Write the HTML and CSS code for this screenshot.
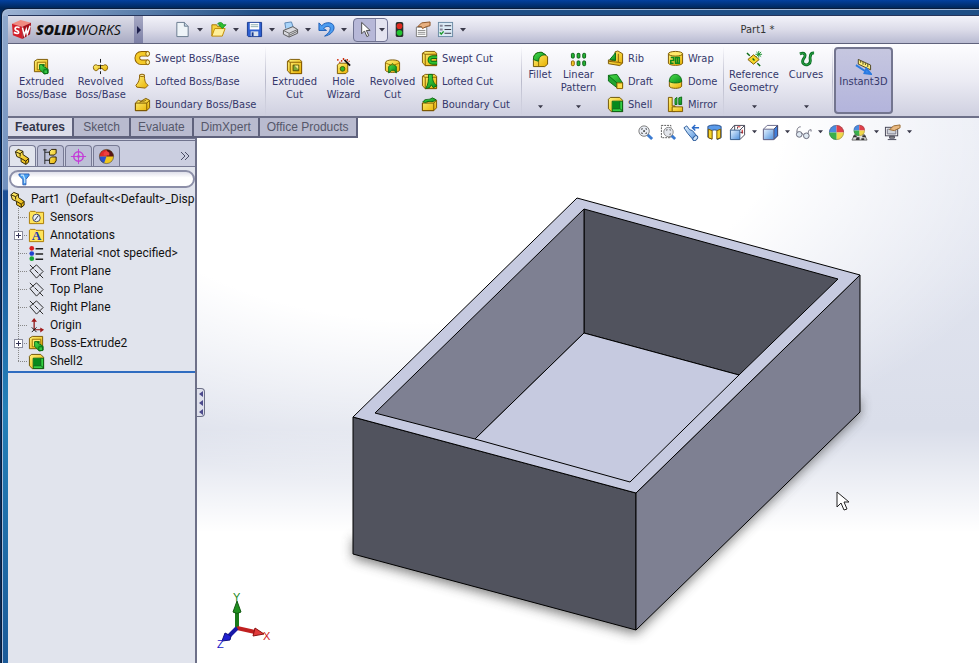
FILE: index.html
```html
<!DOCTYPE html>
<html lang="en">
<head>
  <meta charset="UTF-8">
  <title>SolidWorks - Part1</title>
  <link rel="stylesheet" href="styles.css">
</head>
<body>

<!-- icon sprite -->
<svg class="sprite" aria-hidden="true">
  <defs>
    <linearGradient id="gold" x1="0" y1="0" x2="1" y2="1"><stop offset="0" stop-color="#fff27a"/><stop offset="1" stop-color="#e8b000"/></linearGradient>
    <linearGradient id="leaf" x1="0" y1="0" x2="1" y2="1"><stop offset="0" stop-color="#4be04b"/><stop offset="1" stop-color="#0a8a1c"/></linearGradient>
    <linearGradient id="sky" x1="0" y1="0" x2="1" y2="1"><stop offset="0" stop-color="#e6f4ff"/><stop offset="1" stop-color="#4d8fdc"/></linearGradient>
  </defs>

  <symbol id="caret" viewBox="0 0 6 4"><path d="M0 0h6L3 3.500z" fill="#3a3a4a"/></symbol>

  <symbol id="i-logo" viewBox="0 0 22 22">
    <path d="M1 5L10 1l11 3-8 4z" fill="#f08a80"/><path d="M1 5l11 3v13L2 17z" fill="#d3202a"/><path d="M12 8l9-4-1 12-8 5z" fill="#a50f1a"/>
    <path d="M9 9c-5-2-6 2-3 3s3 5-3 2" fill="none" stroke="#fff" stroke-width="1.800"/><path d="M12 9l2 8 2-6 1 5 3-9" fill="none" stroke="#fff" stroke-width="1.600"/>
  </symbol>

  <!-- quick access -->
  <symbol id="i-new" viewBox="0 0 18 18"><path d="M3 1.500h8l4 4v11H3z" fill="#eef4f8" stroke="#66788c"/><path d="M11 1.500v4h4" fill="#c5d6e4" stroke="#66788c"/></symbol>
  <symbol id="i-open" viewBox="0 0 18 18"><path d="M2 16V4h5l1 2h6v3" fill="#f6d23c" stroke="#a87800"/><path d="M2 16L5 8h11l-3 8z" fill="#fff09a" stroke="#c08a00"/><path d="M8 3c2-2 5-2 6 1h3l-4 4-4-4h2c0-1-1-1-3-1z" fill="#2fc22f" stroke="#0b8a1c" stroke-width=".8"/></symbol>
  <symbol id="i-save" viewBox="0 0 18 18"><path d="M1.500 1.500h15v15h-14l-1-1z" fill="#2d5fd0" stroke="#173a90"/><path d="M4 2h10v7H4z" fill="#fff"/><path d="M5 4h8M5 6h8" stroke="#8aa"/><path d="M5 11h8v5H5z" fill="#dbe3ee"/><path d="M6 12h2v4H6z" fill="#173a90"/></symbol>
  <symbol id="i-print" viewBox="0 0 18 18"><path d="M4 8L3 2l7-1 2 6" fill="#a8d4fa" stroke="#5a86b4"/><path d="M1.500 10l10-4 5 3v4l-9 4-6-3z" fill="#d9d9de" stroke="#555"/><path d="M1.500 10l6 3 9-4M7.500 13v4M8 15l8-4" fill="none" stroke="#666"/></symbol>
  <symbol id="i-undo" viewBox="0 0 18 18"><path d="M1 2v8h8L6 8c2-3 7-3 7 0 0 3-3 6-6 8 6-1 10-5 10-9 0-6-9-7-13-2z" fill="#4b9cf0" stroke="#1a5ab4"/></symbol>
  <symbol id="i-select" viewBox="0 0 18 18"><path d="M6 1.500v12l3-3 2.500 6 2-1-2.500-5.500h4z" fill="#fff" stroke="#444"/></symbol>
  <symbol id="i-traffic" viewBox="0 0 18 18"><rect x="5" y="1" width="8" height="16" rx="2" fill="#26302c"/><circle cx="9" cy="5.500" r="3" fill="#e02a20"/><circle cx="9" cy="12.500" r="3" fill="#22c530"/></symbol>
  <symbol id="i-props" viewBox="0 0 18 18"><path d="M2.500 6.500h11v10h-11z" fill="#fff" stroke="#777"/><path d="M4 10h8M4 12h8M4 14h8" stroke="#888"/><path d="M4 6l4-4 9-1v4l-4 1-4 2-1-2z" fill="#e8b080" stroke="#8a5020"/></symbol>
  <symbol id="i-options" viewBox="0 0 18 18"><rect x="1.500" y="1.500" width="15" height="15" fill="#dbe9f4" stroke="#6a8aa4"/><path d="M8 5h7M8 9h7M8 13h7" stroke="#334"/><path d="M3 4h3v2H3zM3 8h3v2H3z" fill="#889"/><path d="M3 12l1.500 2L7 11" fill="none" stroke="#1a9a2a" stroke-width="1.500"/></symbol>

  <!-- boss / base -->
  <symbol id="i-extrude" viewBox="0 0 18 18"><path d="M1.500 3.500l3-2h11v10l-3 3h-11z" fill="url(#gold)" stroke="#7a5600"/><path d="M4.500 4.500h9v8h-9z" fill="#ffe96a" stroke="#9a7000"/><path d="M7 7h5v1l-2 0 6 4v4l-4 1-5-5z" fill="url(#leaf)" stroke="#0a6a14"/><path d="M11.500 12.500h4v4h-4z" fill="#33c844" stroke="#0a6a14"/></symbol>
  <symbol id="i-revolve" viewBox="0 0 18 18"><path d="M2 12c-2-4 2-6 4-4h6c2-2 6 0 4 4-1 2-4 2-5-1H7c-1 3-4 3-5 1z" fill="url(#gold)" stroke="#7a5600"/><path d="M9 1v4M9 7v5M9 14v3" stroke="#111"/></symbol>
  <symbol id="i-sweep" viewBox="0 0 18 18"><path d="M15 4H8c-6 0-6 9 0 9h7" fill="none" stroke="#8a5c00" stroke-width="6"/><path d="M15 4H8c-6 0-6 9 0 9h7" fill="none" stroke="#f4ca28" stroke-width="4"/><ellipse cx="14.500" cy="4" rx="2" ry="2.500" fill="#fff09a" stroke="#8a5c00"/><ellipse cx="14.500" cy="13" rx="2" ry="2.500" fill="#fff09a" stroke="#8a5c00"/></symbol>
  <symbol id="i-loft" viewBox="0 0 18 18"><path d="M6 2h5c0 6 1 9 4 11l-3 3-9-1-1-2c3-3 4-6 4-11z" fill="url(#gold)" stroke="#8a5c00"/><ellipse cx="8.500" cy="2.500" rx="2.500" ry="1.200" fill="#fff6b0" stroke="#8a5c00"/></symbol>
  <symbol id="i-boundary" viewBox="0 0 18 18"><path d="M1.500 7.500l3-3 3 1 5-3 4 2v8l-3 3h-12z" fill="url(#gold)" stroke="#7a5600"/><path d="M1.500 7.500h12v8h-12zM13.500 7.500l3-3M6 7c2-3 4 0 7-3" fill="none" stroke="#7a5600"/></symbol>

  <!-- cuts -->
  <symbol id="i-block" viewBox="0 0 18 18"><path d="M1.500 3.500l3-2h10l2 2v13h-12l-3-3z" fill="url(#gold)" stroke="#7a5600"/><path d="M4.500 4.500h12v12h-12zM4.500 4.500l-3-1" fill="none" stroke="#8a5c00"/></symbol>
  <symbol id="i-cutextrude" viewBox="0 0 18 18"><use href="#i-block"/><path d="M7.500 7.500h6v6h-6z" fill="#7aa83a" stroke="#5a4a00"/><path d="M9 8h4v4z" fill="#f4e68a"/></symbol>
  <symbol id="i-hole" viewBox="0 0 18 18"><path d="M2.500 7.500l2-2h9v9l-2 2h-9z" fill="url(#gold)" stroke="#7a5600"/><circle cx="8" cy="11.500" r="2.500" fill="#2eb82e" stroke="#4a5a00"/><path d="M10 2l6 6" stroke="#111" stroke-width="2"/><path d="M3 1v2M7 2v2M5 4v1M13 1v2M9 0v2M15 3v1" stroke="#d03010" stroke-width="1.500"/></symbol>
  <symbol id="i-cutrevolve" viewBox="0 0 18 18"><path d="M1.500 5c0-4 15-4 15 0v8c-1 3-14 3-15 0z" fill="url(#gold)" stroke="#7a5600"/><path d="M5 16V9l4-3 4 3v7l-2-3H8z" fill="url(#leaf)" stroke="#0a6a14"/><path d="M2 5c3 3 11 3 14 0" fill="none" stroke="#a07800"/></symbol>
  <symbol id="i-cutsweep" viewBox="0 0 18 18"><use href="#i-block"/><path d="M17 7.500h-5c-4 0-4 6 0 6h5" fill="none" stroke="#0a6a14" stroke-width="4"/><path d="M17 7.500h-5c-4 0-4 6 0 6h5" fill="none" stroke="#2fc22f" stroke-width="2"/></symbol>
  <symbol id="i-cutloft" viewBox="0 0 18 18"><use href="#i-block"/><path d="M8 1.500h4c0 6 1 9 5 12l-4 2-2-3-2 3-4 1c3-5 3-9 3-15z" fill="url(#leaf)" stroke="#0a6a14"/></symbol>
  <symbol id="i-cutboundary" viewBox="0 0 18 18"><use href="#i-boundary"/><path d="M2 6c3-4 6-1 10-4l4 2c-4 4-8 0-11 3z" fill="url(#leaf)" stroke="#0a6a14"/></symbol>

  <!-- features -->
  <symbol id="i-fillet" viewBox="0 0 18 18"><path d="M1.500 9c0-6 4-8 9-7.500l6 4.500v8l-3 2.500h-12z" fill="url(#gold)" stroke="#6a5200"/><path d="M1.500 9c0-6 4-8 9-7.500l4 2.500C9 4 7 7 7 11z" fill="url(#leaf)" stroke="#0a6a14"/><path d="M7 11v5" stroke="#8a6a00"/></symbol>
  <symbol id="i-linear" viewBox="0 0 18 18"><g fill="#25b535" stroke="#0a5a14"><rect x="1.500" y="2.500" width="3" height="5" rx="1"/><rect x="7.500" y="2.500" width="3" height="5" rx="1"/><rect x="13.500" y="2.500" width="3" height="5" rx="1"/><rect x="7.500" y="10.500" width="3" height="5" rx="1"/><rect x="13.500" y="10.500" width="3" height="5" rx="1"/></g><rect x="1.500" y="10.500" width="3" height="5" rx="1" fill="#f4ca28" stroke="#8a5c00"/></symbol>
  <symbol id="i-rib" viewBox="0 0 18 18"><path d="M1.500 10.500l7 1V2l3-1 5 3v10l-3 2.500-12-2z" fill="url(#gold)" stroke="#7a5600"/><path d="M3 10l6-7v8z" fill="url(#leaf)" stroke="#0a6a14"/><path d="M12 4v9l4 1M12 13l-10-1" fill="none" stroke="#8a5c00"/></symbol>
  <symbol id="i-draft" viewBox="0 0 18 18"><path d="M1.500 2.500l9-1 6 9v5h-6z" fill="url(#leaf)" stroke="#0a6a14"/><path d="M1.500 2.500v6l9 7v-5z" fill="#21a52f" stroke="#0a6a14"/><path d="M10.500 10.500h6v6h-6z" fill="#ffe04a" stroke="#8a5c00"/></symbol>
  <symbol id="i-shell" viewBox="0 0 18 18"><path d="M1.500 3.500l2-2h10l3 3v12h-12l-3-3z" fill="url(#gold)" stroke="#6a5200"/><path d="M5.500 5.500h11v11h-11z" fill="#35d045" stroke="#0a5a14"/><path d="M6 6h7v7H6z" fill="#078a1c"/><path d="M13.500 6v7l3 3M13.500 13.500H6" fill="none" stroke="#0a5a14"/></symbol>
  <symbol id="i-wrap" viewBox="0 0 18 18"><path d="M1.500 4v10c1 3 14 3 15 0V4" fill="url(#gold)" stroke="#7a5600"/><ellipse cx="9" cy="4" rx="7.500" ry="2.500" fill="#ffe96a" stroke="#7a5600"/><path d="M4 8h3v3H4v3h3M9 8h4v6H9zM11 8v6" fill="none" stroke="#0a8a1c" stroke-width="1.600"/></symbol>
  <symbol id="i-dome" viewBox="0 0 18 18"><path d="M2.500 8v6c1 3 12 3 13 0V8z" fill="url(#gold)" stroke="#7a5600"/><path d="M2.500 9c0-10 13-10 13 0-2 2-11 2-13 0z" fill="url(#leaf)" stroke="#0a6a14"/></symbol>
  <symbol id="i-mirror" viewBox="0 0 18 18"><path d="M1.500 1.500h4v9h3v6h-7z" fill="url(#gold)" stroke="#7a5600"/><path d="M5.500 16.500v-5h11v5z" fill="url(#gold)" stroke="#7a5600"/><path d="M8.500 3l2-1.500V9h-2zM12.500 2l3-1v8h-3z" fill="url(#leaf)" stroke="#0a6a14"/></symbol>
  <symbol id="i-refgeo" viewBox="0 0 18 18"><path d="M2 9l6-5 6 5-6 5z" fill="#f6d62c" stroke="#7a5600"/><path d="M1 2l3 3M12 13l3 3M7 8l2 2" stroke="#0a6a14" stroke-width="1.500"/><path d="M13.500 0v7M10 3.500h7M11 1l5 5M16 1l-5 5" stroke="#15902a"/></symbol>
  <symbol id="i-curves" viewBox="0 0 18 18"><path d="M2 3c5-2 7 1 4 5-3 5 1 8 5 6 4-2 1-5 2-8 0-3 2-4 4-4" fill="none" stroke="#0a6a24" stroke-width="3"/><path d="M2 3c5-2 7 1 4 5-3 5 1 8 5 6 4-2 1-5 2-8 0-3 2-4 4-4" fill="none" stroke="#2fb04a"/></symbol>
  <symbol id="i-instant" viewBox="0 0 18 18"><path d="M3.500 1.500l13 6v5l-13-6z" fill="#ffef7a" stroke="#4a4220"/><path d="M6 3v2M8.500 4v3M11 5.500v2M13.500 6.500v3" stroke="#4a4220"/><path d="M1 7.500l10 6.500M12 11l5 6-7-1z" fill="#3a8af0" stroke="#2a7ae0" stroke-width="2"/></symbol>

  <!-- heads-up view -->
  <symbol id="i-zoomfit" viewBox="0 0 18 18"><path d="M11 11l5 5" stroke="#3a7ad0" stroke-width="3"/><circle cx="7.500" cy="7.500" r="5.500" fill="#e9edf4" stroke="#777"/><path d="M5 6V5h1M9 5h1v1M10 9v1H9M6 10H5V9M7 7h1v1H7z" fill="none" stroke="#333"/></symbol>
  <symbol id="i-zoomarea" viewBox="0 0 18 18"><path d="M1.500 1.500h10v13h-10z" fill="none" stroke="#555" stroke-dasharray="2 1"/><path d="M12 12l4 4" stroke="#3a7ad0" stroke-width="3"/><circle cx="9" cy="8.500" r="5" fill="#e3e6ec" stroke="#888"/><path d="M7 7V6h1M10 6h1v1M11 10v1h-1" fill="none" stroke="#666"/></symbol>
  <symbol id="i-prev" viewBox="0 0 18 18"><path d="M1 4l3-2 3 4 3 1 5 6-4 4-6-7z" fill="url(#sky)" stroke="#2a5a9a"/><ellipse cx="13" cy="15" rx="3" ry="2" transform="rotate(-45 13 15)" fill="#cfe4fa" stroke="#2a5a9a"/><path d="M17 4h-6M13 1l-3 3 3 3" fill="none" stroke="#2a6ac8" stroke-width="1.500"/></symbol>
  <symbol id="i-section" viewBox="0 0 18 18"><path d="M2 2.500c3-2 11-2 14 0v12l-4 2V7c-1-1-5-1-6 0v9l-4-2z" fill="#5a9ae8" stroke="#274e8a"/><path d="M2.500 5.500l4 1.500v9l-4-1.500zM11.500 7l4-1.500v9l-4 1.500z" fill="#f6d62c" stroke="#7a5600"/></symbol>
  <symbol id="i-cube" viewBox="0 0 18 18"><path d="M1.500 5.500l4-4h11v11l-4 4h-11z" fill="#fff" stroke="#668"/><path d="M12.500 5.500l4-4v11l-4 4z" fill="#3f7edb" stroke="#446"/><path d="M1.500 5.500h11v11h-11z" fill="url(#sky)" stroke="#668"/></symbol>
  <symbol id="i-orient" viewBox="0 0 18 18"><path d="M1.500 6.500l4-5h11v10l-5 5" fill="#fff" stroke="#445"/><path d="M6 1.500v5M11.500 6.500l5-5M9 3v2M14 7v3M15 9h-3" stroke="#445"/><path d="M9 3h3M14 6v4" stroke="#d22"/><path d="M1.500 6.500h10v10h-10z" fill="url(#sky)" stroke="#335a8a"/></symbol>
  <symbol id="i-glasses" viewBox="0 0 18 18"><circle cx="4.500" cy="11" r="3" fill="#dfe9f2" stroke="#667"/><circle cx="12" cy="12.500" r="3" fill="#dfe9f2" stroke="#667"/><path d="M7 10l2 1M2 9c0-5 2-6 4-6M14 10c0-4 2-4 3-4v2" fill="none" stroke="#667"/></symbol>
  <symbol id="i-ball" viewBox="0 0 18 18"><path d="M9 9V1a8 8 0 0 0-8 8z" fill="#4a8ae0"/><path d="M9 9h8a8 8 0 0 0-8-8z" fill="#e0404a"/><path d="M9 9v8a8 8 0 0 0 8-8z" fill="#f0d84a"/><path d="M9 9H1a8 8 0 0 0 8 8z" fill="#3ab04a"/><circle cx="9" cy="9" r="7.500" fill="none" stroke="#555" stroke-opacity=".4"/></symbol>
  <symbol id="i-scene" viewBox="0 0 18 18"><path d="M1 17l3-6h10l3 6z" fill="#ddd" stroke="#666"/><path d="M3 12h3v2H2zM12 12h3l1 2h-4zM6 14h3v3H5zM11 15h3v2h-3z" fill="#333"/><g transform="translate(2 0) scale(.75)"><use href="#i-ball"/></g></symbol>
  <symbol id="i-viewset" viewBox="0 0 18 18"><rect x="1.500" y="3.500" width="13" height="9" fill="#eee" stroke="#445"/><path d="M3.500 5.500h9v5h-9z" fill="#cfd3da" stroke="#778"/><path d="M6 13h5v2H6zM4 16.500h9" stroke="#445" fill="#999"/><path d="M6 6l4-4 7-1v3l-6 3z" fill="#e8b880" stroke="#9a6a30"/></symbol>

  <!-- feature tree -->
  <symbol id="i-part" viewBox="0 0 18 18"><path d="M1.500 4l3-2.500 5 2V7l6 4v4l-3 2.500-5-3V11L3 9z" fill="url(#gold)" stroke="#2a2000"/><path d="M1.500 4l5 2v3M6.500 6l3-2.500M7.500 11l5 3v3M12.500 14l3-3" fill="none" stroke="#2a2000"/></symbol>
  <symbol id="i-config" viewBox="0 0 18 18"><path d="M3 1v16M1 2h4M3 4.500h5M3 13h5" fill="none" stroke="#222"/><path d="M8 3.500l2-2h5v4l-2 2H8zM8 11.500l2-2h5v4l-2 3H8z" fill="url(#gold)" stroke="#2a2000"/></symbol>
  <symbol id="i-dim" viewBox="0 0 18 18"><circle cx="9" cy="9" r="5" fill="none" stroke="#c43ad8" stroke-width="1.500"/><path d="M9 1v16M1 9h16" stroke="#c43ad8"/><circle cx="9" cy="9" r="1.500" fill="#c43ad8"/></symbol>
  <symbol id="i-display" viewBox="0 0 18 18"><circle cx="9" cy="9" r="7.500" fill="#f0c820"/><path d="M9 9V1.500a7.500 7.500 0 0 0-7.500 7.500z" fill="#e02a2a"/><path d="M9 9V1.500a7.500 7.500 0 0 1 7.500 7.500z" fill="#5a1414"/><path d="M9 9H1.500c0 4 2 6 5 7z" fill="#2a50d0"/><path d="M6 5l3-2 3 2v3H6z" fill="#f04040"/><circle cx="9" cy="9" r="7.500" fill="none" stroke="#222" stroke-opacity=".5"/></symbol>
  <symbol id="i-filter" viewBox="0 0 18 18"><path d="M2.500 2.500h13v2l-4 5v7h-4v-7l-5-5z" fill="#4aa0f0" stroke="#1a4aa8"/><path d="M5 4h3l2 5v5" fill="none" stroke="#cfeaff" stroke-width="1.500"/></symbol>
  <symbol id="i-folder" viewBox="0 0 18 18"><path d="M1.500 3.500l1-1h5l1 1h8v12h-15z" fill="#ffe45a" stroke="#a87800"/></symbol>
  <symbol id="i-sensor" viewBox="0 0 18 18"><use href="#i-folder"/><circle cx="9" cy="9.500" r="4" fill="#e8f0f8" stroke="#445"/><path d="M7 12l4-5" stroke="#223"/></symbol>
  <symbol id="i-material" viewBox="0 0 18 18"><path d="M8 4h8M8 9.500h8M8 15h8" stroke="#222" stroke-width="1.500"/><circle cx="4" cy="3.500" r="2.500" fill="#d82020"/><circle cx="4" cy="9" r="2.500" fill="#2040d0"/><circle cx="4" cy="14.500" r="2.500" fill="#18a838"/></symbol>
  <symbol id="i-plane" viewBox="0 0 18 18"><path d="M2 8l7-6 7 7-7 7zM2 2l4 4M7 7l4 4M12 12l4 4" fill="none" stroke="#222"/></symbol>
  <symbol id="i-origin" viewBox="0 0 18 18"><path d="M6.500 14V3M7 13.500h8" stroke="#8a1010" stroke-width="1.300"/><path d="M3.500 5l3-4 3 4zM13 11l4 2.500-4 3z" fill="#a01818"/><path d="M4 11l5 5M9 11l-5 5" stroke="#111"/></symbol>
</svg>

<div class="window">

  <header class="titlebar">
    <div class="brand">
      <svg class="logo"><use href="#i-logo"/></svg>
      <span class="brand-name"><b>SOLID</b>WORKS</span>
    </div>
    <button class="menu-flyout" aria-label="Show menus"><svg viewBox="0 0 4 8"><path d="M0 0v8l4-4z"/></svg></button>
    <nav class="quick" aria-label="Quick access">
      <button class="tool" aria-label="New"><svg><use href="#i-new"/></svg></button><button class="drop" aria-label="New options"><svg><use href="#caret"/></svg></button>
      <button class="tool" aria-label="Open"><svg><use href="#i-open"/></svg></button><button class="drop" aria-label="Open options"><svg><use href="#caret"/></svg></button>
      <button class="tool" aria-label="Save"><svg><use href="#i-save"/></svg></button><button class="drop" aria-label="Save options"><svg><use href="#caret"/></svg></button>
      <button class="tool" aria-label="Print"><svg><use href="#i-print"/></svg></button><button class="drop" aria-label="Print options"><svg><use href="#caret"/></svg></button>
      <button class="tool" aria-label="Undo"><svg><use href="#i-undo"/></svg></button><button class="drop" aria-label="Undo options"><svg><use href="#caret"/></svg></button>
      <span class="select-tool">
        <button class="tool wide" aria-label="Select"><svg><use href="#i-select"/></svg></button><button class="drop small" aria-label="Select options"><svg><use href="#caret"/></svg></button>
      </span>
      <button class="tool wide" aria-label="Rebuild"><svg><use href="#i-traffic"/></svg></button>
      <button class="tool wide" aria-label="File properties"><svg><use href="#i-props"/></svg></button>
      <button class="tool wide" aria-label="Options"><svg><use href="#i-options"/></svg></button><button class="drop small" aria-label="More options"><svg><use href="#caret"/></svg></button>
    </nav>
    <div class="doc-title">Part1 *</div>
  </header>

  <section class="ribbon">
    <div class="group">
      <button class="big wide"><svg><use href="#i-extrude"/></svg><span>Extruded<br>Boss/Base</span></button>
      <button class="big wide"><svg><use href="#i-revolve"/></svg><span>Revolved<br>Boss/Base</span></button>
      <div class="stack boss">
        <button><svg><use href="#i-sweep"/></svg>Swept Boss/Base</button>
        <button><svg><use href="#i-loft"/></svg>Lofted Boss/Base</button>
        <button><svg><use href="#i-boundary"/></svg>Boundary Boss/Base</button>
      </div>
    </div>
    <div class="group">
      <button class="big"><svg><use href="#i-cutextrude"/></svg><span>Extruded<br>Cut</span></button>
      <button class="big"><svg><use href="#i-hole"/></svg><span>Hole<br>Wizard</span></button>
      <button class="big"><svg><use href="#i-cutrevolve"/></svg><span>Revolved<br>Cut</span></button>
      <div class="stack cut">
        <button><svg><use href="#i-cutsweep"/></svg>Swept Cut</button>
        <button><svg><use href="#i-cutloft"/></svg>Lofted Cut</button>
        <button><svg><use href="#i-cutboundary"/></svg>Boundary Cut</button>
      </div>
    </div>
    <div class="group">
      <button class="big menu slim"><svg><use href="#i-fillet"/></svg><span>Fillet</span><svg class="arrow"><use href="#caret"/></svg></button>
      <button class="big menu"><svg><use href="#i-linear"/></svg><span>Linear<br>Pattern</span><svg class="arrow"><use href="#caret"/></svg></button>
      <div class="stack feat">
        <button><svg><use href="#i-rib"/></svg>Rib</button>
        <button><svg><use href="#i-draft"/></svg>Draft</button>
        <button><svg><use href="#i-shell"/></svg>Shell</button>
      </div>
      <div class="stack feat">
        <button><svg><use href="#i-wrap"/></svg>Wrap</button>
        <button><svg><use href="#i-dome"/></svg>Dome</button>
        <button><svg><use href="#i-mirror"/></svg>Mirror</button>
      </div>
    </div>
    <div class="group geometry">
      <button class="big menu"><svg><use href="#i-refgeo"/></svg><span>Reference<br>Geometry</span><svg class="arrow"><use href="#caret"/></svg></button>
      <button class="big menu"><svg><use href="#i-curves"/></svg><span>Curves</span><svg class="arrow"><use href="#caret"/></svg></button>
    </div>
    <button class="big wide active"><svg><use href="#i-instant"/></svg><span>Instant3D</span></button>
  </section>

  <main class="workspace">
    <nav class="tabs">
      <button class="current">Features</button>
      <button>Sketch</button>
      <button>Evaluate</button>
      <button>DimXpert</button>
      <button>Office Products</button>
    </nav>

    <aside class="manager">
      <div class="manager-tabs">
        <button class="current" aria-label="FeatureManager"><svg><use href="#i-part"/></svg></button>
        <button aria-label="Configurations"><svg><use href="#i-config"/></svg></button>
        <button aria-label="DimXpertManager"><svg><use href="#i-dim"/></svg></button>
        <button aria-label="DisplayManager"><svg><use href="#i-display"/></svg></button>
        <button class="more" aria-label="More"><svg viewBox="0 0 10 8"><path d="M1 0l4 4-4 4M5 0l4 4-4 4"/></svg></button>
      </div>
      <label class="filter"><svg><use href="#i-filter"/></svg><input type="text" aria-label="Filter"></label>
      <div class="root"><svg><use href="#i-part"/></svg>Part1&nbsp; (Default&lt;&lt;Default&gt;_Disp</div>
      <ul class="tree">
        <li><svg><use href="#i-sensor"/></svg>Sensors</li>
        <li><button aria-label="Expand Annotations"></button><svg viewBox="0 0 18 18"><use href="#i-folder"/><text x="9" y="14" class="annot-letter">A</text></svg>Annotations</li>
        <li><svg><use href="#i-material"/></svg>Material &lt;not specified&gt;</li>
        <li><svg><use href="#i-plane"/></svg>Front Plane</li>
        <li><svg><use href="#i-plane"/></svg>Top Plane</li>
        <li><svg><use href="#i-plane"/></svg>Right Plane</li>
        <li><svg><use href="#i-origin"/></svg>Origin</li>
        <li><button aria-label="Expand Boss-Extrude2"></button><svg><use href="#i-extrude"/></svg>Boss-Extrude2</li>
        <li><svg><use href="#i-shell"/></svg>Shell2</li>
      </ul>
    </aside>

    <section class="viewport">
      <button class="splitter" aria-label="Collapse panel"><svg viewBox="0 0 5 24"><path d="M5 0v6L1 3zM5 9v6l-4-3zM5 18v6l-4-3z"/></svg></button>
      <nav class="headsup" aria-label="View">
        <button aria-label="Zoom to fit"><svg><use href="#i-zoomfit"/></svg></button>
        <button aria-label="Zoom to area"><svg><use href="#i-zoomarea"/></svg></button>
        <button aria-label="Previous view"><svg><use href="#i-prev"/></svg></button>
        <button aria-label="Section view"><svg><use href="#i-section"/></svg></button>
        <button aria-label="View orientation"><svg><use href="#i-orient"/></svg></button><button class="drop" aria-label="Orientation options"><svg><use href="#caret"/></svg></button>
        <button aria-label="Display style"><svg><use href="#i-cube"/></svg></button><button class="drop" aria-label="Display style options"><svg><use href="#caret"/></svg></button>
        <button aria-label="Hide or show items"><svg><use href="#i-glasses"/></svg></button><button class="drop" aria-label="Hide or show options"><svg><use href="#caret"/></svg></button>
        <button aria-label="Edit appearance"><svg><use href="#i-ball"/></svg></button>
        <button aria-label="Apply scene"><svg><use href="#i-scene"/></svg></button><button class="drop" aria-label="Scene options"><svg><use href="#caret"/></svg></button>
        <button aria-label="View settings"><svg><use href="#i-viewset"/></svg></button><button class="drop" aria-label="View setting options"><svg><use href="#caret"/></svg></button>
      </nav>

      <svg class="model" viewBox="0 0 782 545" preserveAspectRatio="xMinYMin meet" role="img" aria-label="Shelled box">
        <defs>
          <filter id="soft" x="-10%" y="-10%" width="120%" height="120%"><feGaussianBlur stdDeviation="6"/></filter>
        </defs>
        <path d="M156 420l283 76 224-218v18L439 516 156 440z" fill="#444" opacity=".7" filter="url(#soft)"/>
        <g stroke="#000" stroke-linejoin="round">
          <path d="M156 299l283 76v137l-283-76z" fill="#51535e"/>
          <path d="M439 375l224-218v137L439 512z" fill="#7e8092"/>
          <path d="M380 80l283 77-224 218-283-76z" fill="#c6cae0"/>
          <path d="M387 91l254 70-99 96-155-42z" fill="#51535e"/>
          <path d="M387 91v124L278 321l-100-26z" fill="#7e8092"/>
          <path d="M387 215l155 42-109 107-155-43z" fill="#c6cae0"/>
        </g>
        <!-- axis triad -->
        <path d="M40 510V490" stroke="#1a7a1a" stroke-width="4"/><path d="M36 494l4-11 4 11q-4 3-8 0z" fill="#1f8f1f" stroke="#125a12"/>
        <path d="M40 510l18 4" stroke="#c02020" stroke-width="4"/><path d="M58 510l9 6-11 2z" fill="#e03a3a" stroke="#8a1010"/>
        <path d="M40 510l-8 8" stroke="#1818a8" stroke-width="4"/><path d="M28 515l6 3-1 4-8 1z" fill="#2020d0" stroke="#101080"/>
        <text class="axis" x="36" y="483" fill="#1a8a1a">Y</text>
        <text class="axis" x="66" y="522" fill="#d02020">X</text>
        <text class="axis" x="20" y="530" fill="#2020c8">Z</text>
        <!-- pointer -->
        <path d="M640 374v15l4-4 3 7 3-1-3-7h5z" fill="#fff" stroke="#222"/>
      </svg>
    </section>
  </main>
</div>

</body>
</html>
```
FILE: styles.css
```css
* { box-sizing: border-box; }
html, body { height: 100%; }
body {
  margin: 0;
  padding: 8px 0 0 1px;
  overflow: hidden;
  background: linear-gradient(#0341a0, #00285c 8px, #06306a 180px, #0a2c55);
  font-family: "DejaVu Sans Condensed", Tahoma, sans-serif;
  font-size: 11px;
  color: #35386b;
}
button {
  margin: 0;
  padding: 0;
  border: none;
  background: none;
  font: inherit;
  color: inherit;
  display: flex;
  align-items: center;
  justify-content: center;
}
svg { display: block; flex: none; }
.sprite { position: absolute; width: 0; height: 0; }

.window {
  height: 100%;
  display: flex;
  flex-direction: column;
  padding: 6px 0 0 6px;
  border: 1px solid #0a1d3c;
  border-right: none;
  border-bottom: none;
  border-radius: 7px 0 0 0;
  background:
    linear-gradient(90deg, #9db3d4, #1f4f86 260px) 0 0 / 100% 7px no-repeat,
    linear-gradient(#8fa8cc, #7191bf 180px, #1c4f95 182px, #2480b8 400px, #1b5a98);
  box-shadow: inset 1px 1px 0 #a8bddb;
}

/* title bar */
.titlebar {
  display: flex;
  height: 29px;
  border-top: 1px solid #26355c;
  border-bottom: 1px solid #5f627c;
  background: linear-gradient(#f3f3fa, #dcdce9 50%, #b9bbd2);
}
.brand {
  display: flex;
  align-items: center;
  gap: 4px;
  width: 126px;
  padding-left: 3px;
  background: linear-gradient(#dcdce8, #c4c5d6 50%, #a9abc3);
}
.logo { width: 21px; height: 21px; }
.brand-name {
  font: italic 14px "Open Sans", sans-serif;
  color: #111;
}
.brand-name b { font-weight: 800; }
.menu-flyout { width: 9px; background: linear-gradient(#a6a8c4, #7d80a6); }
.menu-flyout svg { width: 4px; height: 8px; fill: #1c1e4a; }
.quick { display: flex; align-items: center; padding-left: 30px; }
.tool { width: 18px; height: 22px; }
.tool svg { width: 17px; height: 17px; }
.tool.wide { width: 23px; }
.drop { width: 18px; height: 22px; }
.drop svg { width: 6px; height: 4px; }
.drop.small { width: 11px; }
.select-tool {
  display: flex;
  border: 1px solid #6f7290;
  border-radius: 4px;
  background: #b7b8d8;
}
.select-tool .tool { width: 21px; }
.select-tool .drop { width: 12px; border-left: 1px solid #8a8cab; background: #e4e4f0; border-radius: 0 4px 4px 0; }
.doc-title {
  flex: 1;
  padding-left: 68px;
  line-height: 28px;
  text-align: center;
  color: #333;
}

/* ribbon */
.ribbon {
  display: flex;
  height: 74px;
  padding: 3px 0 0 4px;
  background: linear-gradient(#fdfdff, #ececf4 50%, #cfd0e0);
  border-bottom: 2px solid #6d7088;
}
.group {
  display: flex;
  padding-right: 8px;
  margin-right: 4px;
  border-right: 1px solid;
  border-image: linear-gradient(transparent, #b9bacb, transparent) 1;
}
.group:nth-child(3), .group.geometry { padding-right: 0; }
.big {
  flex-direction: column;
  justify-content: flex-start;
  width: 49px;
  padding-top: 11px;
  line-height: 13px;
  white-space: nowrap;
}
.big svg { width: 17px; height: 17px; }
.big.menu { padding-top: 4px; }
.big .arrow { width: 5px; height: 4px; margin: auto 0 7px; }
.big.wide { width: 59px; }
.big.slim { width: 28px; }
.geometry .big { width: 52px; }
.geometry { margin-right: 1px; }
.active {
  margin-bottom: 2px;
  padding-top: 9px;
  border: 2px solid #73758f;
  border-radius: 4px;
  background: linear-gradient(#c6c7e0, #b3b4dc);
}
.stack {
  display: grid;
  grid-template-rows: repeat(3, 1fr);
  padding-left: 4px;
}
.stack button { justify-content: flex-start; gap: 4px; white-space: nowrap; }
.stack svg { width: 17px; height: 17px; }
.boss { width: 127px; }
.cut { width: 96px; }
.feat { width: 60px; }

/* workspace: tabs overlap the top of the viewport */
.workspace {
  flex: 1;
  min-height: 0;
  display: grid;
  grid-template: 20px 1fr / 189px 1fr;
}
.tabs {
  grid-area: 1 / 1 / 2 / 3;
  justify-self: start;
  z-index: 1;
  display: flex;
  font: 12px "Liberation Sans", Arial, sans-serif;
  color: #55576a;
}
.tabs button {
  min-width: 57px;
  padding: 0 7px 1px;
  background: #b9bbcf;
  border-right: 2px solid #5f627c;
  border-bottom: 2px solid #5f627c;
}
.tabs .current {
  font-weight: bold;
  color: #33354a;
  background: #dcdde9;
}

.manager {
  grid-area: 2 / 1;
  display: flex;
  flex-direction: column;
  overflow: hidden;
  background: #e1e4ed;
  color: #111;
  border-right: 2px solid #6d7088;
  font: 12px Roboto, "Segoe UI", sans-serif;
}
.manager-tabs {
  display: flex;
  align-items: flex-end;
  gap: 1px;
  height: 29px;
  padding: 0 2px 0 1px;
  background: #cbcee0;
  border-bottom: 1px solid #777a94;
  border-top: 3px double #70738e;
}
.manager-tabs button {
  width: 27px;
  height: 21px;
  border: 1px solid #777a94;
  border-bottom: none;
  border-radius: 4px 4px 0 0;
  background: #bdc0d6;
}
.manager-tabs svg { width: 17px; height: 17px; }
.manager-tabs .current { background: #e1e4ed; }
.manager-tabs .more { margin-left: auto; width: 16px; border: none; background: none; }
.manager-tabs .more svg { width: 10px; height: 8px; fill: none; stroke: #4a4d66; }
.filter {
  display: flex;
  align-items: center;
  height: 18px;
  margin: 3px 0 2px 1px;
  padding-left: 6px;
  border: 2px solid #8c8fa8;
  border-radius: 9px;
  background: linear-gradient(#dfe0ea, #fff 40%);
}
.filter svg { width: 14px; height: 14px; }
.filter input { flex: 1; min-width: 0; border: none; background: none; outline: none; font: inherit; }
.root {
  display: flex;
  align-items: center;
  gap: 4px;
  height: 18px;
  padding-left: 1px;
  white-space: nowrap;
}
.root svg { width: 18px; height: 17px; }
.tree {
  list-style: none;
  margin: 0;
  padding: 0 0 1px;
  border-bottom: 2px solid #2f6cc0;
}
.tree li {
  display: flex;
  align-items: center;
  gap: 5px;
  height: 18px;
  padding-left: 20px;
  background:
    repeating-linear-gradient(#888 0 1px, transparent 1px 2px) 10px 0 / 1px 100% no-repeat,
    repeating-linear-gradient(90deg, #888 0 1px, transparent 1px 2px) 10px 9px / 10px 1px no-repeat;
}
.tree li:last-child { background-size: 1px 9px, 10px 1px; }
.tree svg { width: 17px; height: 17px; }
.tree button {
  width: 9px;
  height: 9px;
  margin: 1px 0 0 -14px;
  border: 1px solid #8a8c9c;
  background:
    linear-gradient(#335, #335) center / 5px 1px no-repeat,
    linear-gradient(#335, #335) center / 1px 5px no-repeat,
    #fff;
}
.annot-letter { font: bold 14px "Liberation Serif", serif; fill: #1a3ab0; text-anchor: middle; }

.viewport {
  grid-area: 1 / 2 / 3 / 3;
  position: relative;
  overflow: hidden;
  background:
    linear-gradient(rgba(255, 255, 255, 0) 57%, #fff 76%),
    radial-gradient(ellipse 640px 370px at 30% 0, #fff 55%, rgba(255, 255, 255, 0)),
    linear-gradient(#e6e9f3, #dadeea 56%);
}
.headsup {
  position: absolute;
  top: 4px;
  right: 65px;
  display: flex;
}
.headsup button { width: 23px; height: 20px; }
.headsup button.drop { width: 10px; }
.headsup svg { width: 17px; height: 17px; }
.headsup .drop svg { width: 5px; height: 4px; }
.model { width: 100%; height: auto; }
.axis { font: 11px "Liberation Sans", sans-serif; }
.splitter {
  position: absolute;
  left: -1px;
  top: 270px;
  width: 9px;
  height: 29px;
  border: 1px solid #6d7088;
  border-left: none;
  border-radius: 0 4px 4px 0;
  background: #dfe1ec;
}
.splitter svg { width: 5px; height: 24px; fill: #4c4a8c; }
```
